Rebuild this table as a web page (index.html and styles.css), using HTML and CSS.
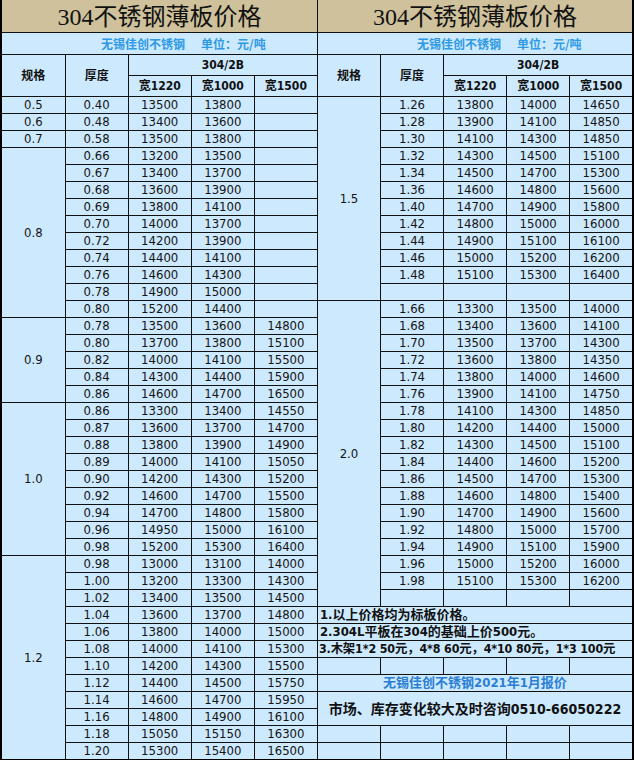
FILE: index.html
```html
<!DOCTYPE html>
<html lang="zh-CN">
<head>
<meta charset="utf-8">
<title>304不锈钢薄板价格</title>
<link rel="stylesheet" href="styles.css">
</head>
<body>
<table class="sheet">
<colgroup>
<col class="c1"><col class="cn"><col class="cn"><col class="cn"><col class="cn">
<col class="cn"><col class="cn"><col class="cn"><col class="cn"><col class="cl">
</colgroup>
<thead>
<tr class="r-title"><th colspan="5" class="title">304不锈钢薄板价格</th><th colspan="5" class="title">304不锈钢薄板价格</th></tr>
<tr class="r-sub"><th colspan="5" class="sub">无锡佳创不锈钢<span class="unit">单位：元/吨</span></th><th colspan="5" class="sub">无锡佳创不锈钢<span class="unit">单位：元/吨</span></th></tr>
<tr class="r-head"><th rowspan="2" class="hd">规格</th><th rowspan="2" class="hd">厚度</th><th colspan="3" class="hd">304/2B</th><th rowspan="2" class="hd">规格</th><th rowspan="2" class="hd">厚度</th><th colspan="3" class="hd">304/2B</th></tr>
<tr class="r-head"><th class="hd">宽1220</th><th class="hd">宽1000</th><th class="hd">宽1500</th><th class="hd">宽1220</th><th class="hd">宽1000</th><th class="hd">宽1500</th></tr>
</thead>
<tbody>
<tr><td>0.5</td><td>0.40</td><td>13500</td><td>13800</td><td></td><td rowspan="12">1.5</td><td>1.26</td><td>13800</td><td>14000</td><td>14650</td></tr>
<tr><td>0.6</td><td>0.48</td><td>13400</td><td>13600</td><td></td><td>1.28</td><td>13900</td><td>14100</td><td>14850</td></tr>
<tr><td>0.7</td><td>0.58</td><td>13500</td><td>13800</td><td></td><td>1.30</td><td>14100</td><td>14300</td><td>14850</td></tr>
<tr><td rowspan="10">0.8</td><td>0.66</td><td>13200</td><td>13500</td><td></td><td>1.32</td><td>14300</td><td>14500</td><td>15100</td></tr>
<tr><td>0.67</td><td>13400</td><td>13700</td><td></td><td>1.34</td><td>14500</td><td>14700</td><td>15300</td></tr>
<tr><td>0.68</td><td>13600</td><td>13900</td><td></td><td>1.36</td><td>14600</td><td>14800</td><td>15600</td></tr>
<tr><td>0.69</td><td>13800</td><td>14100</td><td></td><td>1.40</td><td>14700</td><td>14900</td><td>15800</td></tr>
<tr><td>0.70</td><td>14000</td><td>13700</td><td></td><td>1.42</td><td>14800</td><td>15000</td><td>16000</td></tr>
<tr><td>0.72</td><td>14200</td><td>13900</td><td></td><td>1.44</td><td>14900</td><td>15100</td><td>16100</td></tr>
<tr><td>0.74</td><td>14400</td><td>14100</td><td></td><td>1.46</td><td>15000</td><td>15200</td><td>16200</td></tr>
<tr><td>0.76</td><td>14600</td><td>14300</td><td></td><td>1.48</td><td>15100</td><td>15300</td><td>16400</td></tr>
<tr><td>0.78</td><td>14900</td><td>15000</td><td></td><td></td><td></td><td></td><td></td></tr>
<tr><td>0.80</td><td>15200</td><td>14400</td><td></td><td rowspan="18">2.0</td><td>1.66</td><td>13300</td><td>13500</td><td>14000</td></tr>
<tr><td rowspan="5">0.9</td><td>0.78</td><td>13500</td><td>13600</td><td>14800</td><td>1.68</td><td>13400</td><td>13600</td><td>14100</td></tr>
<tr><td>0.80</td><td>13700</td><td>13800</td><td>15100</td><td>1.70</td><td>13500</td><td>13700</td><td>14300</td></tr>
<tr><td>0.82</td><td>14000</td><td>14100</td><td>15500</td><td>1.72</td><td>13600</td><td>13800</td><td>14350</td></tr>
<tr><td>0.84</td><td>14300</td><td>14400</td><td>15900</td><td>1.74</td><td>13800</td><td>14000</td><td>14600</td></tr>
<tr><td>0.86</td><td>14600</td><td>14700</td><td>16500</td><td>1.76</td><td>13900</td><td>14100</td><td>14750</td></tr>
<tr><td rowspan="9">1.0</td><td>0.86</td><td>13300</td><td>13400</td><td>14550</td><td>1.78</td><td>14100</td><td>14300</td><td>14850</td></tr>
<tr><td>0.87</td><td>13600</td><td>13700</td><td>14700</td><td>1.80</td><td>14200</td><td>14400</td><td>15000</td></tr>
<tr><td>0.88</td><td>13800</td><td>13900</td><td>14900</td><td>1.82</td><td>14300</td><td>14500</td><td>15100</td></tr>
<tr><td>0.89</td><td>14000</td><td>14100</td><td>15050</td><td>1.84</td><td>14400</td><td>14600</td><td>15200</td></tr>
<tr><td>0.90</td><td>14200</td><td>14300</td><td>15200</td><td>1.86</td><td>14500</td><td>14700</td><td>15300</td></tr>
<tr><td>0.92</td><td>14600</td><td>14700</td><td>15500</td><td>1.88</td><td>14600</td><td>14800</td><td>15400</td></tr>
<tr><td>0.94</td><td>14700</td><td>14800</td><td>15800</td><td>1.90</td><td>14700</td><td>14900</td><td>15600</td></tr>
<tr><td>0.96</td><td>14950</td><td>15000</td><td>16100</td><td>1.92</td><td>14800</td><td>15000</td><td>15700</td></tr>
<tr><td>0.98</td><td>15200</td><td>15300</td><td>16400</td><td>1.94</td><td>14900</td><td>15100</td><td>15900</td></tr>
<tr><td rowspan="12">1.2</td><td>0.98</td><td>13000</td><td>13100</td><td>14000</td><td>1.96</td><td>15000</td><td>15200</td><td>16000</td></tr>
<tr><td>1.00</td><td>13200</td><td>13300</td><td>14300</td><td>1.98</td><td>15100</td><td>15300</td><td>16200</td></tr>
<tr><td>1.02</td><td>13400</td><td>13500</td><td>14500</td><td></td><td></td><td></td><td></td></tr>
<tr><td>1.04</td><td>13600</td><td>13700</td><td>14800</td><td colspan="5" class="note">1.以上价格均为标板价格。</td></tr>
<tr><td>1.06</td><td>13800</td><td>14000</td><td>15000</td><td colspan="5" class="note">2.304L平板在304的基础上价500元。</td></tr>
<tr><td>1.08</td><td>14000</td><td>14100</td><td>15300</td><td colspan="5" class="note tight">3.木架1*2 50元，4*8 60元，4*10 80元，1*3 100元</td></tr>
<tr><td>1.10</td><td>14200</td><td>14300</td><td>15500</td><td></td><td></td><td></td><td></td><td></td></tr>
<tr><td>1.12</td><td>14400</td><td>14500</td><td>15750</td><td colspan="5" class="quote">无锡佳创不锈钢2021年1月报价</td></tr>
<tr><td>1.14</td><td>14600</td><td>14700</td><td>15950</td><td colspan="5" rowspan="2" class="contact">市场、库存变化较大及时咨询0510-66050222</td></tr>
<tr><td>1.16</td><td>14800</td><td>14900</td><td>16100</td></tr>
<tr><td>1.18</td><td>15050</td><td>15150</td><td>16300</td><td></td><td></td><td></td><td></td><td></td></tr>
<tr><td>1.20</td><td>15300</td><td>15400</td><td>16500</td><td></td><td></td><td></td><td></td><td></td></tr>
</tbody>
</table>
</body>
</html>
```
FILE: styles.css
```css
html, body {
  margin: 0;
  padding: 0;
  background: #ffffff;
}

body {
  width: 634px;
  height: 760px;
  overflow: hidden;
}

.sheet {
  border-collapse: collapse;
  table-layout: fixed;
  width: 634px;
  background: #cde9fe;
  color: #141414;
  font-family: "DejaVu Sans Condensed", "DejaVu Sans", "Noto Sans CJK SC", sans-serif;
  font-size: 13px;
  border-left: 2px solid #000;
  border-right: 2px solid #000;
  border-bottom: 2px solid #000;
}

.c1 { width: 64px; }
.cn { width: 63px; }
.cl { width: 63px; }

.sheet td,
.sheet th {
  border: 1px solid #111;
  padding: 0;
  height: 16px;
  line-height: 16px;
  text-align: center;
  white-space: nowrap;
  overflow: hidden;
  font-weight: normal;
}

.sheet .title {
  height: 30px;
  line-height: 30px;
  border-top: 0;
  background: #cec19b;
  color: #111;
  font-family: "Liberation Serif", "Noto Sans CJK SC", serif;
  font-size: 24px;
  padding-top: 2px;
}

.sheet .sub {
  height: 21px;
  line-height: 21px;
  text-align: left;
  padding-left: 99px;
  color: #2f9ae4;
  font-family: "Noto Sans CJK SC", sans-serif;
  font-size: 12px;
  font-weight: bold;
}

.unit {
  margin-left: 16px;
}

.sheet .hd {
  height: 20px;
  line-height: 20px;
  font-family: "DejaVu Sans Condensed", "Noto Sans CJK SC", sans-serif;
  font-size: 12px;
  font-weight: bold;
  color: #111;
}

.sheet .note {
  text-align: left;
  padding-left: 2px;
  font-family: "DejaVu Sans Condensed", "Noto Sans CJK SC", sans-serif;
  font-size: 13px;
  font-weight: bold;
  color: #111;
}

.sheet .tight {
  padding-left: 1px;
  font-size: 12.4px;
  letter-spacing: -0.15px;
}

.sheet .quote {
  color: #2a7ed3;
  font-family: "DejaVu Sans Condensed", "Noto Sans CJK SC", sans-serif;
  font-size: 13px;
  font-weight: bold;
}

.sheet .contact {
  font-family: "DejaVu Sans Condensed", "Noto Sans CJK SC", sans-serif;
  font-size: 14px;
  font-weight: bold;
  color: #111;
}
```
